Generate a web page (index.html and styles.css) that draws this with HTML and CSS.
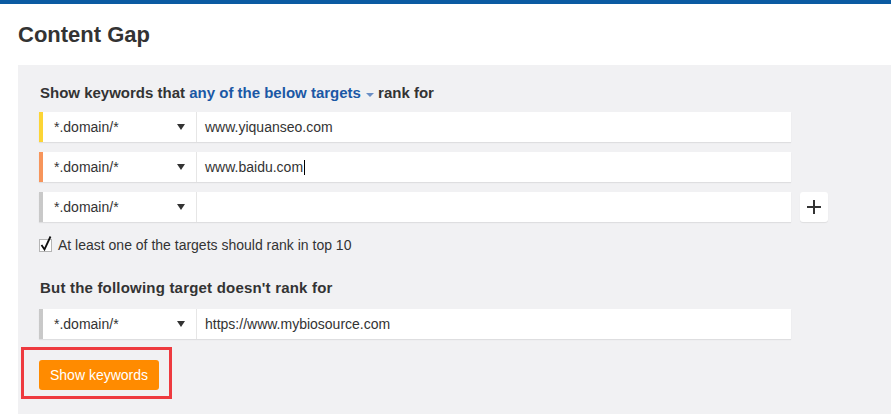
FILE: index.html
```html
<!DOCTYPE html>
<html>
<head>
<meta charset="utf-8">
<link rel="stylesheet" href="styles.css">
</head>
<body>
<div class="topbar"></div>
<h1 class="title">Content Gap</h1>
<div class="panel">
  <div class="label">Show keywords that <span class="link">any of the below targets<span class="caret"></span></span> rank for</div>
  <div class="rows">
    <div class="row-line">
      <div class="row">
        <div class="strip strip-yellow"></div>
        <div class="select"><span>*.domain/*</span><span class="arrow"></span></div>
        <div class="input">www.yiquanseo.com</div>
      </div>
    </div>
    <div class="row-line">
      <div class="row">
        <div class="strip strip-orange"></div>
        <div class="select"><span>*.domain/*</span><span class="arrow"></span></div>
        <div class="input">www.baidu.com<span class="cursor"></span></div>
      </div>
    </div>
    <div class="row-line">
      <div class="row">
        <div class="strip strip-gray"></div>
        <div class="select"><span>*.domain/*</span><span class="arrow"></span></div>
        <div class="input"></div>
      </div>
      <div class="plus">
        <svg width="14" height="14" viewBox="0 0 14 14"><path d="M7 0V14M0 7H14" stroke="#333" stroke-width="2"/></svg>
      </div>
    </div>
  </div>
  <div class="check-line">
    <svg class="checkbox" width="14" height="17" viewBox="0 0 14 17">
      <rect x="0.5" y="4.5" width="12" height="12" fill="#fff" stroke="#b5b5b5"/>
      <path d="M2.5 10L5.5 14.5L11.5 1.5" fill="none" stroke="#111" stroke-width="1.8"/>
    </svg>
    <span>At least one of the targets should rank in top 10</span>
  </div>
  <div class="label label-second">But the following target doesn't rank for</div>
  <div class="row-line">
    <div class="row">
      <div class="strip strip-gray"></div>
      <div class="select"><span>*.domain/*</span><span class="arrow"></span></div>
      <div class="input">https://www.mybiosource.com</div>
    </div>
  </div>
  <div class="highlight">
    <button class="btn">Show keywords</button>
  </div>
</div>
</body>
</html>
```

FILE: styles.css
```css
* { box-sizing: border-box; }
html, body { margin: 0; padding: 0; background: #fff; }
body {
  font-family: "Liberation Sans", Arial, sans-serif;
  color: #333;
  height: 414px;
  overflow: hidden;
}
.topbar { height: 4px; background: #0b5ba2; }
.title {
  margin: 0;
  padding: 18px 0 0 18px;
  font-size: 22px;
  line-height: 26px;
  font-weight: bold;
  color: #333;
}
.panel {
  margin: 17px 0 0 18px;
  background: #f1f1f3;
  padding: 20px 0 30px 21px;
}
.label {
  font-size: 15px;
  line-height: 16px;
  font-weight: bold;
  color: #333;
  padding-left: 1px;
  margin-bottom: 11px;
}
.label-second { letter-spacing: 0.2px; }
.link { color: #1b58a5; }
.caret {
  display: inline-block;
  width: 0; height: 0;
  border-left: 4px solid transparent;
  border-right: 4px solid transparent;
  border-top: 4px solid #6a8ec5;
  margin-left: 5px;
  vertical-align: 1px;
}
.rows { display: flex; flex-direction: column; gap: 10px; }
.row-line { display: flex; align-items: center; }
.row {
  display: flex;
  width: 752px;
  height: 30px;
  background: #fff;
  box-shadow: 0 1px 1px rgba(0,0,0,0.08);
  font-size: 14px;
  color: #333;
}
.strip { width: 4px; flex: none; }
.strip-yellow { background: #fcd535; }
.strip-orange { background: #f7955b; }
.strip-gray {
  background-color: #d2d2d2;
  background-image: radial-gradient(#bdbdbd 0.6px, transparent 0.8px);
  background-size: 2px 2px;
}
.select {
  width: 154px;
  flex: none;
  border-right: 1px solid #e6e6e6;
  display: flex;
  align-items: center;
  justify-content: space-between;
  padding: 0 11px 0 11px;
}
.arrow {
  width: 0; height: 0;
  border-left: 4px solid transparent;
  border-right: 4px solid transparent;
  border-top: 6px solid #333;
}
.input {
  flex: 1;
  display: flex;
  align-items: center;
  padding-left: 8px;
}
.cursor {
  display: inline-block;
  width: 1px;
  height: 15px;
  background: #000;
  margin-left: 1px;
}
.plus {
  width: 28px;
  height: 30px;
  margin-left: 9px;
  background: #fff;
  border-radius: 3px;
  box-shadow: 0 1px 1px rgba(0,0,0,0.08);
  display: flex;
  align-items: center;
  justify-content: center;
}
.check-line {
  display: flex;
  align-items: center;
  margin-top: 14px;
  height: 18px;
  font-size: 14px;
  color: #333;
}
.checkbox { margin-right: 5px; margin-top: -4px; }
.label-second { margin-top: 26px; margin-bottom: 13px; }
.highlight {
  margin: 8px 0 0 -18px;
  width: 151px;
  height: 52px;
  border: 3px solid #ee3a3f;
  padding: 10px 0 0 15px;
}
.btn {
  width: 120px;
  height: 30px;
  border: none;
  border-radius: 3px;
  background: #ff8b00;
  color: #fff;
  font-family: "Liberation Sans", Arial, sans-serif;
  font-size: 14px;
  padding: 0;
}
```
